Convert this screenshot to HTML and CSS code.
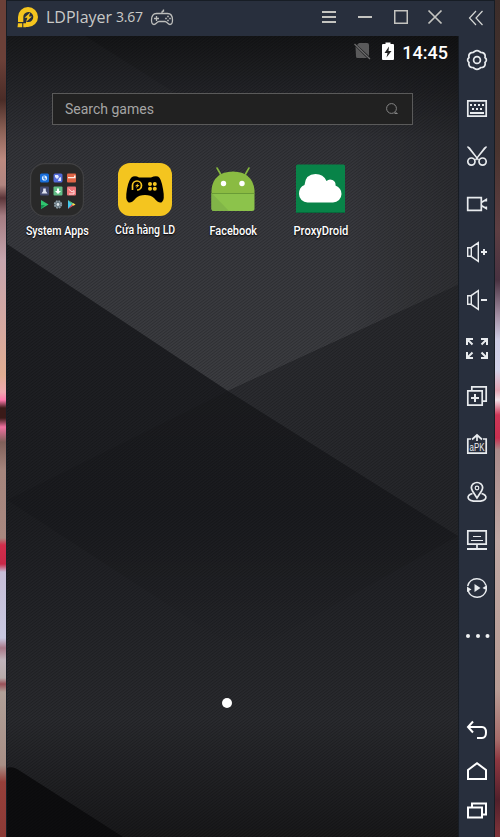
FILE: index.html
```html
<!DOCTYPE html>
<html lang="vi">
<head>
<meta charset="utf-8">
<title>LDPlayer</title>
<link rel="stylesheet" href="styles.css">
</head>
<body>
<div class="desktop">
  <div class="edge edge-left"></div>
  <div class="window">
    <div class="main">
      <header class="titlebar">
        <svg class="logo" width="22" height="22" viewBox="0 0 22 22">
          <path d="M1 15V10A10 10 0 1 1 11 20H9V15H11.500A5 5 0 1 0 6.300 10V15Z" fill="#f5c51e"/>
          <path d="M1 16.200H5.200V20.200H.5ZM6.300 16.200H9V20.200H6.300Z" fill="#f5c51e"/>
          <path d="M13.200 5.500 7.500 10.800H10.400L9 15 15 9.600H12Z" fill="#f5c51e"/>
        </svg>
        <div class="title">LDPlayer</div><div class="version">3.67</div>
        <svg class="pad" width="24" height="18" viewBox="0 0 24 18" fill="none" stroke="#bcbdbb" stroke-width="1.300">
          <path d="M6.500 4.500H17.500C21 4.500 22.500 7.500 22.500 11C22.500 14 21.500 15.500 20 15.500C18 15.500 17 12.500 15 12.500H9C7 12.500 6 15.500 4 15.500C2.500 15.500 1.500 14 1.500 11C1.500 7.500 3 4.500 6.500 4.500ZM12 4.500V3Q12 2 13.500 2V.5M6.500 7V12M4 9.500H9"/>
          <path d="M15.200 9.500H16.800M17.200 11.500H18.800M17.200 7.500H18.800M19.200 9.500H20.800" stroke-width="1.600"/>
        </svg>
        <svg class="controls" width="122" height="18" viewBox="321 8 122 18" fill="none" stroke="#c4c4c0" stroke-width="2">
          <path d="M322 12H336M322 17H336M322 22H336M358 17H372"/>
          <path d="M394.750 10.750H407.250V23.250H394.750Z" stroke-width="1.500"/>
          <path d="M428.500 10.500 441.500 23.500M441.500 10.500 428.500 23.500" stroke-width="1.700"/>
        </svg>
      </header>
      <main class="screen">
        <svg class="wallpaper" viewBox="7 36 451 801" preserveAspectRatio="none">
          <defs>
            <linearGradient id="top" x1="0" y1="36" x2="0" y2="390" gradientUnits="userSpaceOnUse">
              <stop offset="0" stop-color="#18191b"/><stop offset=".13" stop-color="#232428"/><stop offset=".3" stop-color="#323338"/><stop offset=".5" stop-color="#37383d"/><stop offset="1" stop-color="#3b3c40"/>
            </linearGradient>
            <linearGradient id="base" x1="0" y1="244" x2="0" y2="837" gradientUnits="userSpaceOnUse">
              <stop offset="0" stop-color="#1e1f23"/><stop offset=".45" stop-color="#1d1e22"/><stop offset=".65" stop-color="#242529"/><stop offset=".8" stop-color="#292a2e"/><stop offset="1" stop-color="#18181a"/>
            </linearGradient>
            <linearGradient id="side" x1="250" y1="400" x2="440" y2="500" gradientUnits="userSpaceOnUse">
              <stop offset="0" stop-color="#2a2b2f"/><stop offset="1" stop-color="#242529"/>
            </linearGradient>
            <linearGradient id="fold" x1="0" y1="36" x2="0" y2="140" gradientUnits="userSpaceOnUse">
              <stop offset="0" stop-color="#000" stop-opacity=".15"/><stop offset="1" stop-color="#000" stop-opacity="0"/>
            </linearGradient>
            <linearGradient id="facet" x1="0" y1="391" x2="0" y2="655" gradientUnits="userSpaceOnUse">
              <stop offset="0" stop-color="#000" stop-opacity=".08"/><stop offset=".55" stop-color="#000" stop-opacity=".1"/><stop offset="1" stop-color="#000" stop-opacity="0"/>
            </linearGradient>
            <linearGradient id="vig" x1="350" y1="0" x2="458" y2="0" gradientUnits="userSpaceOnUse">
              <stop offset="0" stop-color="#000" stop-opacity="0"/><stop offset="1" stop-color="#000" stop-opacity=".18"/>
            </linearGradient>
            <pattern id="twill" width="4" height="3" patternUnits="userSpaceOnUse">
              <path d="M-1 3.750 5-.75M-1 .75 1-.75M3 3.750 5 2.250" stroke="#000" stroke-opacity=".28" stroke-width=".8"/>
            </pattern>
          </defs>
          <path d="M7 36H458V837H7Z" fill="url(#base)"/>
          <path d="M7 36H458V285L228 391 7 244Z" fill="url(#top)"/>
          <path d="M85 36H213V117Z" fill="url(#fold)"/>
          <path d="M213 36H458V140H213Z" fill="url(#fold)"/>
          <path d="M350 36H458V285L350 335Z" fill="url(#vig)"/>
          <path d="M458 285V536L228 391Z" fill="url(#side)"/>
          <path d="M7 500 228 391 245 655Z" fill="url(#facet)"/>
          <path d="M228 391 458 536 245 655Z" fill="url(#facet)"/>
          <path d="M7 768Q12 766 17 769L123 837H7Z" fill="#0d0d0f"/>
          <path d="M7 36H458V837H7Z" fill="url(#twill)"/>
        </svg>
        <div class="status">
          <svg width="18" height="18" viewBox="353 43 18 18">
            <path d="M359 44H367Q369 44 369 46V57L357 46ZM355.500 47.500 367 59H357.500Q356 59 356 57.500Z" fill="#5a5a5b"/>
            <path d="M354.500 45 370 60" stroke="#6d6d6e" stroke-width="1.300"/>
          </svg>
          <svg class="battery" width="12" height="19" viewBox="0 0 12 19">
            <path d="M1 2H3.500V.5H8.500V2H11Q12 2 12 3V17Q12 18 11 18H1Q0 18 0 17V3Q0 2 1 2Z" fill="#fff"/>
            <path d="M7 4.500 2.500 11H5.500L4.500 15.500 9.500 9H6.500Z" fill="#222"/>
          </svg>
          <div class="clock">14:45</div>
        </div>
        <div class="search">
          <span>Search games</span>
          <svg width="14" height="14" viewBox="0 0 14 14" fill="none" stroke="#858585"><circle cx="6.500" cy="6.500" r="4.900"/><path d="M9.500 11.500H12.500M10.500 10 12 11.500"/></svg>
        </div>
        <div class="apps">
          <div class="app">
            <svg class="app-icon" width="54" height="54" viewBox="0 0 54 54">
              <rect x=".6" y=".6" width="52.800" height="52.400" rx="14" fill="#292929" stroke="#414143" stroke-width="1.200"/>
              <rect x="10" y="10.500" width="9" height="9" rx="1.500" fill="#176dd9"/><circle cx="14.500" cy="15" r="2.600" fill="#d9ecff"/><path d="M14 13V16H16" stroke="#176dd9" fill="none"/>
              <rect x="23.500" y="10.500" width="9" height="9" rx="1.500" fill="#536bd8"/><path d="M25 12H28L29 14 27 16 25 14ZM29 15 31 14V18H28Z" fill="#e4eaff"/>
              <rect x="37" y="10.500" width="9" height="9" rx="1" fill="#df6546"/><path d="M38 14H44V12.500H45.500V15.200H38Z" fill="#fff0e8"/>
              <rect x="10" y="23.500" width="9" height="9" rx="1" fill="#42496f"/><path d="M13.200 25.500H15.800V28L17.500 30.500H11.500L13.200 28Z" fill="#dfe3f2"/>
              <rect x="23.500" y="23.500" width="9" height="9" rx="1" fill="#62bd86"/><path d="M27 25.500H29V28H31L28 31 25 28H27Z" fill="#fff"/>
              <rect x="37" y="23.500" width="9" height="9" rx="1" fill="#ed7478"/><path d="M38.500 26 42 29 44 27.500V31H39" stroke="#ffe0df" fill="none"/>
              <path d="M11 37 18.500 41.500 11 46Z" fill="#2fc66f"/><path d="M11 42H15L11 46Z" fill="#168c51"/>
              <circle cx="28" cy="41.500" r="3.300" fill="#687983" stroke="#8c9da6" stroke-width="1.800" stroke-dasharray="1.700 .9"/><circle cx="28" cy="41.500" r="1.400" fill="#dce4e8"/>
              <path d="M38 37V46L42 41.500Z" fill="#43c9ef"/><path d="M38 37 45 41.500H42Z" fill="#65dd8d"/><path d="M38 46 42 41.500 43.500 42.500Z" fill="#ef5267"/><path d="M42 41.500 43.500 40.300 45.500 41.500 43.500 42.800Z" fill="#ffd84a"/>
            </svg>
            <div class="label l1">System Apps</div>
          </div>
          <div class="app">
            <svg class="app-icon" width="54" height="54" viewBox="0 0 54 54">
              <rect width="54" height="53" rx="12" fill="#f4c51f"/>
              <path d="M15 13.500Q18 12.500 21 14.500H33Q37 12.500 40 13.500Q43 14.500 45 26Q47 37 44 39Q41 41 36 35Q33 32 27 32Q21 32 18 35Q13 41 10 39Q7 37 9 26Q11 15 15 13.500Z" fill="#000"/>
              <path d="M14.500 27V22.500A4.500 4.500 0 1 1 19 27" fill="none" stroke="#f4c51f" stroke-width="1.700"/><path d="M20.500 20 17 23.300H19L18 25.500 21.500 22H19.500Z" fill="#f4c51f"/>
              <g fill="#f4c51f"><circle cx="32" cy="21" r="2"/><circle cx="36.800" cy="21" r="2"/><circle cx="32" cy="25.700" r="2"/><circle cx="36.800" cy="25.700" r="2"/></g>
            </svg>
            <div class="label l2">Cửa hàng LD</div>
          </div>
          <div class="app">
            <svg class="app-icon" width="54" height="54" viewBox="0 0 54 54">
              <path d="M11 5 14.500 11M43 5 39.500 11" stroke="#86b93f" stroke-width="1.600" stroke-linecap="round"/>
              <path d="M5.500 30V27Q7 9 27 8.500Q46.500 9 48.500 27V30Z" fill="#8abb42"/>
              <path d="M5.500 30H48.500V45.500Q48.500 48 46 48H8Q5.500 48 5.500 45.500Z" fill="#8cc34b"/>
              <path d="M5.500 30 23 48H8Q5.500 48 5.500 45.500Z" fill="#81b548"/>
              <path d="M5.500 30.500H48.500" stroke="#699c36"/>
              <circle cx="17.500" cy="20.500" r="2.700" fill="#fff"/><circle cx="36" cy="20.500" r="2.700" fill="#fff"/>
            </svg>
            <div class="label l3">Facebook</div>
          </div>
          <div class="app">
            <svg class="app-icon" width="54" height="54" viewBox="0 0 54 54">
              <rect x="2" y="1.500" width="49" height="48.500" rx="1.500" fill="#088348"/><path d="M2 49.500H51" stroke="#07683b"/>
              <path d="M13.500 39.500A8.500 8.500 0 0 1 5 31Q5 24 10.500 22Q11.500 11 21.500 11Q29.500 11 32.500 18Q35 15.500 38.500 17Q42 18.500 41.500 22.500Q47.500 25 47.500 31A8.500 8.500 0 0 1 39 39.500Z" fill="#fff"/>
            </svg>
            <div class="label l4">ProxyDroid</div>
          </div>
        </div>
        <div class="page-dot"></div>
      </main>
    </div>
    <nav class="sidebar">
      <div class="cell collapse"><svg viewBox="0 0 24 24"><path d="M11 4 4.500 11 11 18M17.500 4 11 11 17.500 18" stroke-width="1.200" stroke="#d5d7d5"/></svg></div>
      <div class="cell"><svg viewBox="0 0 24 24"><path d="M9.500 3.500Q12 1.800 14.500 3.500L15.800 4.500 17.500 4.600Q20 5.200 20.200 8L20 9.500Q22.800 12 20 14.500L20.200 16Q20 18.800 17.500 19.400L15.800 19.500 14.500 20.500Q12 22.200 9.500 20.500L8.200 19.500 6.500 19.400Q4 18.800 3.800 16L4 14.500Q1.200 12 4 9.500L3.800 8Q4 5.200 6.500 4.600L8.200 4.500Z"/><circle cx="12" cy="12" r="3.400"/></svg></div>
      <div class="cell"><svg viewBox="0 0 24 24"><path d="M2.800 4.800H21.200V20.200H2.800Z"/><path d="M5 9H19" stroke-width="2" stroke-dasharray="2 2"/><path d="M7 13H17" stroke-width="2" stroke-dasharray="2 2"/><path d="M5 17H19" stroke-width="2"/></svg></div>
      <div class="cell"><svg viewBox="0 0 24 24"><path d="M2.500 2.500 12 14 21.500 2.500M4 3.500 13.500 16M20 3.500 10.500 16" stroke-width="1.400"/><circle cx="6.400" cy="17.600" r="3.600"/><circle cx="17.600" cy="17.600" r="3.600"/></svg></div>
      <div class="cell"><svg viewBox="0 0 24 24"><path d="M2.700 5.700H16.300V18.300H2.700ZM16.300 10.500 21.300 7.500V9.500M16.300 13.500 21.300 16.500V14.500"/></svg></div>
      <div class="cell"><svg viewBox="0 0 24 24"><path d="M2.700 7.700H6L13.300 2.700V21.300L6 16.300H2.700ZM6.300 7.700V16.300" stroke-width="1.400"/><path d="M16 12H22M19 9V15" stroke-width="2"/></svg></div>
      <div class="cell"><svg viewBox="0 0 24 24"><path d="M2.700 7.700H6L13.300 2.700V21.300L6 16.300H2.700ZM6.300 7.700V16.300" stroke-width="1.400"/><path d="M16 12H22" stroke-width="2"/></svg></div>
      <div class="cell"><svg viewBox="0 0 24 24"><path d="M8 3H2V9M2 3 7.500 8.500M16 3H22V9M22 3 16.500 8.500M8 22H2V16M2 22 7.500 16.500M16 22H22V16M22 22 16.500 16.500" stroke-width="2"/></svg></div>
      <div class="cell"><svg viewBox="0 0 24 24"><path d="M6.800 6V2.800H21.200V17.200H18M2.800 6.800H17.200V21.200H2.800Z"/><path d="M6 14H14M10 10V18" stroke-width="2"/></svg></div>
      <div class="cell"><svg viewBox="0 0 24 24"><path d="M6 7H2.800V21.200H21.200V7H18M12 9V3M7 7.500 12 3 17 7.500"/><text x="4.500" y="18.500" textLength="15" lengthAdjust="spacingAndGlyphs">aPK</text></svg></div>
      <div class="cell"><svg viewBox="0 0 24 24"><path d="M12 18 7.500 11Q5 7 8 4Q10 2.500 12 2.500Q14 2.500 16 4Q19 7 16.500 11Z"/><circle cx="12" cy="8" r="1.800" stroke-width="1.200"/><path d="M7.500 13.500C1 15 1 21.200 12 21.200S23 15 16.500 13.500"/></svg></div>
      <div class="cell"><svg viewBox="0 0 24 24"><path d="M2.800 2.800H21.200V16.200H2.800ZM12 16V20.500"/><path d="M2 21H22" stroke-width="2"/><path d="M8 8.500H16M6 12.500H18" stroke-width="1"/></svg></div>
      <div class="cell"><svg viewBox="0 0 24 24"><path d="M2.700 10A9.500 9.500 0 0 1 21 9.500M21.300 14A9.500 9.500 0 0 1 3 14.500" stroke-width="1.500"/><path d="M9.500 8 15.500 12 9.500 16ZM17.500 12 22 9V14.500ZM6.500 13.500 2 10.500V16Z" fill="#e8ebee" stroke="none"/></svg></div>
      <div class="cell"><svg viewBox="0 0 24 24"><g fill="#f0f2f4" stroke="none"><circle cx="3" cy="12" r="2"/><circle cx="13" cy="12" r="2"/><circle cx="22.500" cy="12" r="2"/></g></svg></div>
      <div class="cell nav-back"><svg viewBox="0 0 24 24"><path d="M8 3.500 3 9 8 14.500M3 9H17Q21 9 21 14.500Q21 20 17 20H12" stroke-width="2"/></svg></div>
      <div class="cell nav-home"><svg viewBox="0 0 24 24"><path d="M3 11 12 4.200 21 11V20H3Z" stroke-width="2"/></svg></div>
      <div class="cell nav-recent"><svg viewBox="0 0 24 24"><path d="M7 7.500V4.500H21V15.500H18M3 8.500H17V18.500H3Z" stroke-width="2"/></svg></div>
    </nav>
  </div>
  <div class="edge edge-right"></div>
</div>
</body>
</html>
```
FILE: styles.css
```css
* { box-sizing: border-box; }
body { margin: 0; background: #282f3d; font-family: Roboto, sans-serif; overflow: hidden; }
svg { display: block; flex: none; overflow: visible; }
.desktop { display: flex; width: 500px; height: 837px; }
.edge-left {
  width: 6px;
  background: linear-gradient(#6b4038 0, #6b4038 60px, #4a2c27 100px, #8a6055 130px, #bd8a80 160px, #b08580 185px, #5a3438 198px, #a47c82 216px, #c6a5ae 260px, #d6a9a0 330px, #e0ad92 375px, #f0a8b0 392px, #ff78ac 400px, #3a1a18 408px, #3a1a18 418px, #f070a0 427px, #80605a 442px, #a5857d 470px, #a88880 538px, #d12d4b 545px, #c82848 564px, #c7bfd8 572px, #c8c8e0 638px, #a87888 648px, #c0b4bb 660px, #b8acab 678px, #9a5058 684px, #b0a098 692px, #a88f86 765px, #963f3a 782px, #8c3a36 837px);
}
.edge-right {
  width: 5px;
  background: linear-gradient(#3c2d2a 0, #49342f 150px, #5d3e42 230px, #493241 280px, #a18da2 315px, #cfcde6 340px, #d5d3ea 370px, #e7a5b5 390px, #f4e0e8 400px, #ce3657 415px, #c92f50 438px, #ab8b8b 450px, #c0a8a4 540px, #b89c94 690px, #a56b69 740px, #8d3740 760px, #51202b 800px, #80343a 837px);
}
.window {
  display: flex;
  width: 489px;
  border: solid #171d25;
  border-width: 1px 1px 0;
  background: #282f3d;
}
.main { width: 452px; }
.titlebar { display: flex; height: 35px; align-items: flex-start; color: #c9c9c7; font-family: "Open Sans", sans-serif; white-space: nowrap; }
.logo { margin: 6px 0 0 10px; }
.title { margin: 5px 0 0 7px; width: 70px; font-size: 16px; line-height: 22px; }
.version { width: 34px; margin-top: 5px; font-size: 14px; line-height: 22px; letter-spacing: -.2px; }
.pad { margin: 8px 0 0; }
.controls { margin: 7px 0 0 147px; }
.screen { position: relative; height: 801px; display: flex; flex-direction: column; border-right: 1px solid #171c23; }
.wallpaper { position: absolute; left: 0; top: 0; width: 451px; height: 801px; z-index: 0; }
.status, .search, .apps, .page-dot { position: relative; z-index: 1; }
.status { display: flex; height: 32px; padding: 6px 10px 0 0; justify-content: flex-end; }
.battery { margin-left: 11px; }
.clock { width: 46px; margin-left: 8px; color: #fff; font-size: 18px; font-weight: 500; line-height: 22px; text-align: right; white-space: nowrap; }
.search { display: flex; width: 361px; height: 32px; margin: 25px 0 0 45px; padding: 0 13px 0 12px; align-items: center; justify-content: space-between; background: #212121; border: 1px solid #5a5a5a; color: #a5a5a5; font-size: 14px; }
.apps { display: grid; grid-template-columns: repeat(4, 88px); margin: 38px 0 0 6px; }
.app { display: flex; flex-direction: column; align-items: center; }
.label { margin-top: 5px; color: #fff; font-size: 13px; font-weight: 500; line-height: 17px; white-space: nowrap; text-shadow: 0 1px 2px #000; }
.l1 { transform: scaleX(.82); }
.l2 { margin-top: 4px; transform: scaleX(.81); }
.l3 { transform: scaleX(.84); }
.l4 { transform: scaleX(.86); }
.page-dot { width: 10px; height: 10px; margin: auto 0 129px 215px; border-radius: 50%; background: #fff; }
.sidebar { width: 35px; }
.cell { display: flex; height: 48px; align-items: center; justify-content: center; }
.cell svg { width: 24px; height: 24px; fill: none; stroke: #e8ebee; stroke-width: 1.7; }
.cell text { fill: #e8ebee; stroke: none; font: 10px "Liberation Sans", sans-serif; }
.collapse { height: 35px; }
.nav-back { height: 40px; margin-top: 50px; }
.nav-home { height: 41px; }
.nav-recent { height: 39px; }
.nav-back svg, .nav-home svg, .nav-recent svg { stroke: #fff; }
```
